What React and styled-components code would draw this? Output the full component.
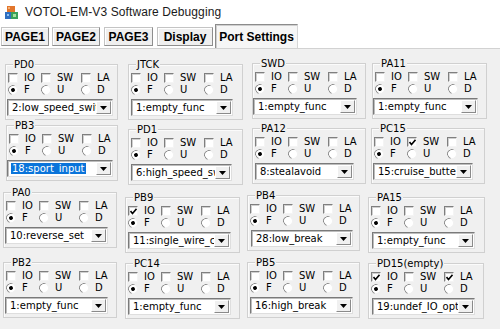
import React from "react"
import styled, { createGlobalStyle } from "styled-components"

const GlobalStyle = createGlobalStyle`
  html, body {
    margin: 0;
    padding: 0;
    background: #ffffff;
  }
  body {
    font-family: "Liberation Sans", Arial, sans-serif;
    color: #000;
  }
  * {
    box-sizing: border-box;
  }
`

const Window = styled.div`
  width: 500px;
  height: 329px;
  overflow: hidden;
  background: #ffffff;
`

const TitleBar = styled.div`
  height: 24px;
  display: flex;
  align-items: center;
  padding-left: 5px;
  gap: 7px;
`

const TitleText = styled.span`
  font-size: 12px;
  color: #1a1a1a;
  letter-spacing: 0.1px;
`

const TabStrip = styled.div`
  height: 24px;
  display: flex;
  align-items: flex-start;
  padding-top: 3px;
  padding-left: 1px;
`

const Tab = styled.div`
  width: ${props => props.$w}px;
  height: ${props => (props.$active ? 24 : 19)}px;
  margin-left: ${props => props.$ml}px;
  margin-top: ${props => (props.$active ? -3 : 0)}px;
  display: flex;
  align-items: center;
  justify-content: center;
  font-size: 12px;
  font-weight: bold;
  background: ${props => (props.$active ? "#f6f6f6" : "#efefef")};
  border: 1px solid;
  border-color: ${props =>
    props.$active
      ? "#8c8c8c #d6d6d6 transparent #8c8c8c"
      : "#c4c4c4 #8e8e8e #8e8e8e #c4c4c4"};
  border-bottom-width: ${props => (props.$active ? 0 : 1)}px;
  box-shadow: ${props =>
    props.$active ? "inset 1px 1px #cfcfcf" : "inset 1px 1px #ffffff"};
`

const Panel = styled.div`
  height: 281px;
  background: #f0f0f0;
  border-top: 1px solid #d2d2d2;
  font-family: "DejaVu Sans", Verdana, sans-serif;
`

const Row = styled.div`
  display: flex;
  align-items: flex-start;
  margin-top: ${props => props.$mt}px;
`

const Group = styled.div`
  position: relative;
  width: ${props => props.$w}px;
  height: 56px;
  margin-left: ${props => props.$ml}px;
  margin-top: ${props => props.$mt}px;
  padding-top: 7px;
  border: 1px solid #d0d0d0;
  box-shadow: inset 1px 1px #fbfbfb;
`

const Legend = styled.span`
  position: absolute;
  top: -7px;
  left: 7px;
  padding: 0 1px;
  background: #f0f0f0;
  font-size: 10px;
  line-height: 13px;
`

const OptionRow = styled.div`
  display: flex;
  align-items: center;
  height: 12px;
  padding-left: 2px;
`

const Option = styled.div`
  display: flex;
  align-items: center;
  gap: 6px;
  width: ${props => (props.$w ? `${props.$w}px` : "auto")};
  font-size: 10px;
  line-height: 12px;
`

const CheckBox = styled.span`
  position: relative;
  width: 10px;
  height: 10px;
  flex: none;
  background: #ffffff;
  border: 1px solid;
  border-color: #7f7f7f #f4f4f4 #f4f4f4 #7f7f7f;
  box-shadow: inset 1px 1px #d0d0d0;

  svg {
    position: absolute;
    left: 0.5px;
    top: 0.5px;
  }
`

const Radio = styled.span`
  position: relative;
  width: 10px;
  height: 10px;
  flex: none;
  border-radius: 50%;
  background: #ffffff;
  border: 1px solid;
  border-color: #7f7f7f #f0f0f0 #f0f0f0 #7f7f7f;
  transform: rotate(-25deg);

  &::after {
    content: "";
    display: ${props => (props.$on ? "block" : "none")};
    position: absolute;
    left: 2px;
    top: 2px;
    width: 4px;
    height: 4px;
    border-radius: 50%;
    background: #000;
  }
`

const Combo = styled.div`
  display: flex;
  width: ${props => props.$w}px;
  height: 17px;
  margin-top: 3px;
  margin-left: ${props => props.$ml}px;
  background: #ffffff;
  border: 1px solid;
  border-color: #7a7a7a #dedede #dedede #7a7a7a;
  box-shadow: inset 1px 1px #bdbdbd;
`

const ComboText = styled.div`
  flex: 1;
  overflow: hidden;
  white-space: nowrap;
  padding-left: 3px;
  padding-top: 1px;
  font-size: 10px;
  line-height: 13px;
`

const ComboValue = styled.span`
  padding: 0 1px;
  background: ${props => (props.$selected ? "#0a74da" : "transparent")};
  color: ${props => (props.$selected ? "#ffffff" : "#000000")};
`

const ComboButton = styled.div`
  width: 15px;
  height: 13px;
  margin: 1px 1px 1px 0;
  display: flex;
  align-items: center;
  justify-content: center;
  background: #f0f0f0;
  border: 1px solid;
  border-color: #ffffff #8a8a8a #8a8a8a #ffffff;
`

const tabs = [
  { label: "PAGE1", w: 48, ml: 0 },
  { label: "PAGE2", w: 48, ml: 3 },
  { label: "PAGE3", w: 49, ml: 4 },
  { label: "Display", w: 56, ml: 4 },
  { label: "Port Settings", w: 83, ml: 2, active: true },
]

const rows = [
  {
    mt: 14,
    groups: [
      { name: "PD0", x: 5, y: 1, w: 113, cx: 2, cw: 106, value: "2:low_speed_switch" },
      { name: "JTCK", x: 128, y: 1, w: 115, cx: 3, cw: 102, value: "1:empty_func" },
      { name: "SWD", x: 252, y: 0, w: 114, cx: 1, cw: 104, value: "1:empty_func" },
      { name: "PA11", x: 372, y: 0, w: 115, cx: 1, cw: 105, value: "1:empty_func" },
    ],
  },
  {
    mt: 5,
    groups: [
      { name: "PB3", x: 6, y: 0, w: 112, cx: 1, cw: 106, value: "18:sport_input", selected: true },
      { name: "PD1", x: 128, y: 4, w: 115, cx: 3, cw: 101, value: "6:high_speed_switch" },
      { name: "PA12", x: 252, y: 3, w: 114, cx: 3, cw: 99, value: "8:stealavoid" },
      { name: "PC15", x: 371, y: 3, w: 114, cx: 2, cw: 100, value: "15:cruise_butten", checks: [false, true, false] },
    ],
  },
  {
    mt: 7,
    groups: [
      { name: "PA0", x: 3, y: 0, w: 114, cx: 2, cw: 103, value: "10:reverse_set" },
      { name: "PB9", x: 125, y: 5, w: 115, cx: 3, cw: 103, value: "11:single_wire_communication", checks: [true, false, false] },
      { name: "PB4", x: 247, y: 3, w: 113, cx: 4, cw: 102, value: "28:low_break" },
      { name: "PA15", x: 368, y: 5, w: 117, cx: 4, cw: 103, value: "1:empty_func" },
    ],
  },
  {
    mt: 9,
    groups: [
      { name: "PB2", x: 3, y: 0, w: 114, cx: 2, cw: 103, value: "1:empty_func" },
      { name: "PC14", x: 125, y: 1, w: 115, cx: 3, cw: 103, value: "1:empty_func" },
      { name: "PB5", x: 247, y: 0, w: 113, cx: 3, cw: 103, value: "16:high_break" },
      { name: "PD15(empty)", x: 368, y: 1, w: 116, cx: 4, cw: 103, value: "19:undef_IO_option", checks: [true, false, true] },
    ],
  },
]

const AppIcon = () => (
  <svg width="13" height="13" viewBox="0 0 13 13">
    <rect x="2" y="0" width="8" height="6" fill="#e2762c" />
    <rect x="3" y="1" width="2" height="2" fill="#f4b27a" />
    <rect x="0" y="6" width="6" height="7" fill="#2f6fc0" />
    <rect x="6" y="6" width="7" height="7" fill="#3aa05a" />
    <rect x="2" y="8" width="2" height="2" fill="#8fc0f0" />
    <rect x="8" y="8" width="3" height="3" fill="#a6e0a0" />
  </svg>
)

const Check = () => (
  <svg width="7" height="7" viewBox="0 0 7 7">
    <polyline points="0.5,3 2.5,5.5 6.5,0.8" fill="none" stroke="#000" strokeWidth="1.6" />
  </svg>
)

const Arrow = () => (
  <svg width="7" height="4" viewBox="0 0 7 4">
    <polygon points="0,0 7,0 3.5,4" fill="#000" />
  </svg>
)

const PortGroup = ({ g, ml }) => {
  const checks = g.checks || [false, false, false]
  const labels = ["IO", "SW", "LA"]
  const radios = ["F", "U", "D"]
  const widths = [33, 40, 0]
  return (
    <Group $w={g.w} $ml={ml} $mt={g.y}>
      <Legend>{g.name}</Legend>
      <OptionRow>
        {labels.map((l, i) => (
          <Option key={l} $w={widths[i]}>
            <CheckBox>{checks[i] && <Check />}</CheckBox>
            {l}
          </Option>
        ))}
      </OptionRow>
      <OptionRow>
        {radios.map((r, i) => (
          <Option key={r} $w={widths[i]}>
            <Radio $on={i === 0} />
            {r}
          </Option>
        ))}
      </OptionRow>
      <Combo $w={g.cw} $ml={g.cx - 1}>
        <ComboText>
          <ComboValue $selected={g.selected}>{g.value}</ComboValue>
        </ComboText>
        <ComboButton>
          <Arrow />
        </ComboButton>
      </Combo>
    </Group>
  )
}

const App = () => (
  <Window>
    <GlobalStyle />
    <TitleBar>
      <AppIcon />
      <TitleText>VOTOL-EM-V3 Software Debugging</TitleText>
    </TitleBar>
    <TabStrip>
      {tabs.map(t => (
        <Tab key={t.label} $w={t.w} $ml={t.ml} $active={t.active}>
          {t.label}
        </Tab>
      ))}
    </TabStrip>
    <Panel>
      {rows.map((row, ri) => {
        let right = 0
        return (
          <Row key={ri} $mt={row.mt}>
            {row.groups.map(g => {
              const ml = g.x - right
              right = g.x + g.w
              return <PortGroup key={g.name} g={g} ml={ml} />
            })}
          </Row>
        )
      })}
    </Panel>
  </Window>
)

export default App
